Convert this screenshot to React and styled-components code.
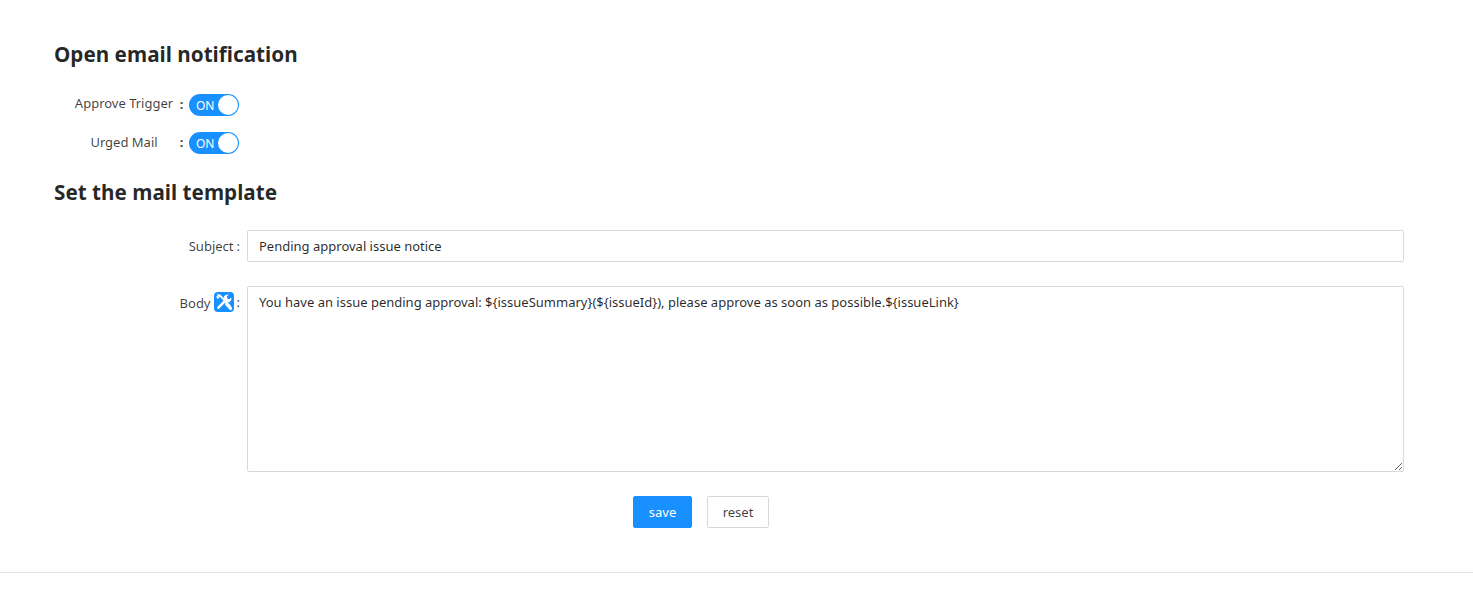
import React from 'react';
import styled, { createGlobalStyle } from 'styled-components';

const GlobalStyle = createGlobalStyle`
  html, body {
    margin: 0;
    padding: 0;
    background: #fff;
    font-family: "Noto Sans", "Open Sans", sans-serif;
    font-size: 13px;
    color: rgba(0, 0, 0, 0.75);
  }
`;

const Page = styled.div`
  height: 593px;
  box-sizing: border-box;
  padding-top: 40px;
  overflow: hidden;
`;

const Section = styled.section`
  padding-left: 54px;
  padding-right: 69px;
`;

const Heading = styled.h2`
  margin: 0;
  height: 28px;
  line-height: 28px;
  font-size: 20.7px;
  font-weight: 700;
  color: rgba(0, 0, 0, 0.85);
`;

const Toggles = styled.div`
  display: flex;
  flex-direction: column;
  gap: 16px;
  padding: 26px 0 24px 20px;
`;

const ToggleRow = styled.div`
  display: flex;
  align-items: center;
  height: 22px;
`;

const ToggleLabel = styled.span`
  width: 100px;
  text-align: center;
  white-space: nowrap;
  margin-top: ${(p) => (p.$raised ? '-5px' : '-3px')};
`;

const Colon = styled.b`
  width: 15px;
  text-align: center;
  margin-top: -2px;
`;

const Switch = styled.span`
  position: relative;
  display: inline-block;
  width: 50px;
  height: 22px;
  border-radius: 11px;
  background: #1890ff;
  color: #fff;
  font-size: 12px;
  line-height: 23px;
  padding-left: 7px;
  box-sizing: border-box;

  &::after {
    content: '';
    position: absolute;
    top: 1px;
    right: 1px;
    width: 20px;
    height: 20px;
    border-radius: 50%;
    background: #fff;
  }
`;

const FormRow = styled.div`
  display: grid;
  grid-template-columns: 193px 1fr;
  margin-bottom: 24px;
`;

const TemplateForm = styled.div`
  padding-top: 24px;
`;

const FieldLabel = styled.label`
  display: flex;
  justify-content: flex-end;
  align-items: center;
  height: 32px;
  padding-right: 7px;
  white-space: nowrap;
`;

const LabelText = styled.span`
  margin-top: ${(p) => (p.$low ? '2px' : '0')};
`;

const LabelColon = styled.span`
  margin-left: 3px;
`;

const IconBadge = styled.span`
  display: inline-flex;
  align-items: center;
  justify-content: center;
  width: 20px;
  height: 20px;
  margin-left: 3px;
  border-radius: 4px;
  background: #1890ff;
`;

const fieldStyles = `
  display: block;
  width: 100%;
  box-sizing: border-box;
  border: 1px solid #d9d9d9;
  border-radius: 2px;
  background: #fff;
  padding: 0 11px;
  font-family: inherit;
  font-size: 13px;
  color: rgba(0, 0, 0, 0.85);
  outline: none;
`;

const TextInput = styled.input`
  ${fieldStyles}
  height: 32px;
`;

const TextArea = styled.textarea`
  ${fieldStyles}
  height: 186px;
  padding-top: 5px;
  padding-bottom: 6px;
  line-height: 20px;
`;

const Actions = styled.div`
  display: flex;
  justify-content: center;
  gap: 15px;
  padding-right: 56px;
`;

const Button = styled.button`
  height: 32px;
  width: ${(p) => (p.$primary ? '59px' : '62px')};
  padding: 0;
  border: 1px solid ${(p) => (p.$primary ? '#1890ff' : '#d9d9d9')};
  border-radius: 2px;
  background: ${(p) => (p.$primary ? '#1890ff' : '#fff')};
  color: ${(p) => (p.$primary ? '#fff' : 'rgba(0, 0, 0, 0.75)')};
  font-family: inherit;
  font-size: 13px;
`;

const Divider = styled.hr`
  margin: 44px 0 0;
  border: 0;
  border-top: 1px solid #e4e4e4;
`;

// crossed wrench and screwdriver
const ToolsIcon = () => (
  <svg width="20" height="20" viewBox="0 0 20 20" fill="none">
    <path d="M4 3 L6 3.6 L16 14" stroke="#fff" strokeWidth="1.8" strokeLinecap="round" />
    <path d="M3 4 L3.6 6 L6 4" stroke="#fff" strokeWidth="1.4" />
    <path d="M12.6 12.2 L16.6 16.4" stroke="#fff" strokeWidth="3" strokeLinecap="round" />
    <path d="M4.4 15.6 L12.6 7.4" stroke="#fff" strokeWidth="2.6" strokeLinecap="round" />
    <path
      d="M17.2 5.4 A4 4 0 1 1 14.6 2.8 L12.8 4.8 L13.2 6.8 L15.2 7.2 Z"
      fill="#fff"
    />
  </svg>
);

export default function App() {
  return (
    <>
      <GlobalStyle />
      <Page>
        <Section>
          <Heading>Open email notification</Heading>
          <Toggles>
            <ToggleRow>
              <ToggleLabel $raised>Approve Trigger</ToggleLabel>
              <Colon>:</Colon>
              <Switch>ON</Switch>
            </ToggleRow>
            <ToggleRow>
              <ToggleLabel>Urged Mail</ToggleLabel>
              <Colon>:</Colon>
              <Switch>ON</Switch>
            </ToggleRow>
          </Toggles>
          <Heading>Set the mail template</Heading>
          <TemplateForm>
            <FormRow>
              <FieldLabel>
                <LabelText>Subject</LabelText>
                <LabelColon>:</LabelColon>
              </FieldLabel>
              <TextInput defaultValue="Pending approval issue notice" />
            </FormRow>
            <FormRow>
              <FieldLabel>
                <LabelText $low>Body</LabelText>
                <IconBadge>
                  <ToolsIcon />
                </IconBadge>
                <LabelColon>:</LabelColon>
              </FieldLabel>
              <TextArea defaultValue="You have an issue pending approval: ${issueSummary}(${issueId}), please approve as soon as possible.${issueLink}" />
            </FormRow>
            <Actions>
              <Button $primary>save</Button>
              <Button>reset</Button>
            </Actions>
          </TemplateForm>
        </Section>
        <Divider />
      </Page>
    </>
  );
}
